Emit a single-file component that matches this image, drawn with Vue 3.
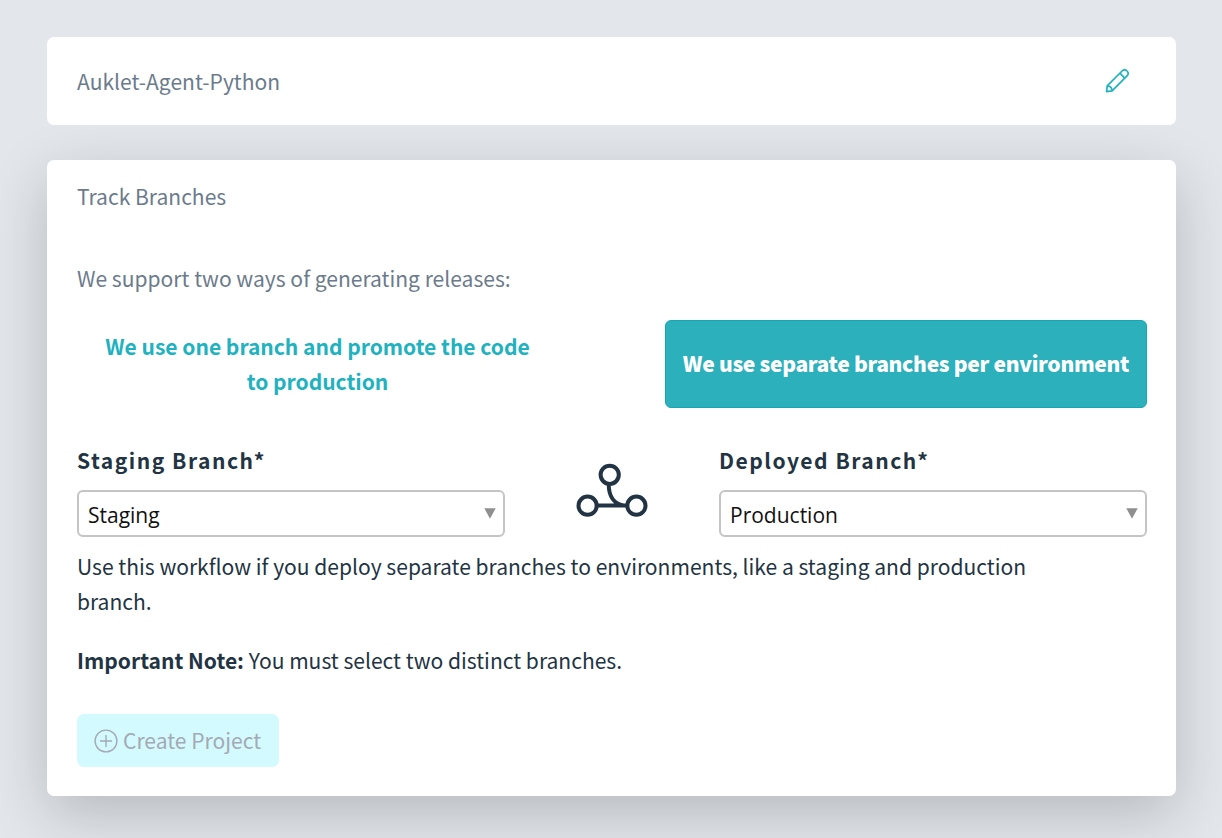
<script setup>
const fields = [
  { key: 'staging', label: 'Staging Branch*', value: 'Staging' },
  { key: 'deployed', label: 'Deployed Branch*', value: 'Production' },
]
</script>

<template>
  <main class="page">
    <section class="card header-card">
      <span>Auklet-Agent-Python</span>
      <svg class="pencil" width="26" height="26" viewBox="0 0 26 26" fill="none" stroke="#20b2bf" stroke-width="1.7" stroke-linejoin="round">
        <path d="M1.600 23.600 2.200 17.900 17.100 3c1.500-1.500 3.400-1.500 4.900 0s1.500 3.400 0 4.900L7.100 22.800Z" />
        <path d="m14.900 5.200 4.900 4.900M2.200 17.900c2.700.1 4.700 2.200 4.900 4.900" />
      </svg>
    </section>

    <section class="card track-card">
      <h2 class="title">Track Branches</h2>
      <p class="intro">We support two ways of generating releases:</p>

      <div class="modes">
        <button class="mode">We use one branch and promote the code to production</button>
        <button class="mode active">We use separate branches per environment</button>
      </div>

      <div class="fields">
        <template v-for="(field, i) in fields" :key="field.key">
          <svg v-if="i === 1" class="branch" width="72" height="54" viewBox="0 0 72 54" fill="none" stroke="#223443" stroke-width="4">
            <circle cx="33.700" cy="11.800" r="9.100" />
            <circle cx="11.600" cy="42.700" r="9.100" />
            <circle cx="60.400" cy="42.700" r="9.100" />
            <path d="M20.700 42.500h30.600M32.700 21c0 12.500 5.500 20 15 21.500" />
          </svg>
          <div class="field">
            <label>{{ field.label }}</label>
            <div class="select">
              <span>{{ field.value }}</span>
              <svg width="12" height="11" viewBox="0 0 12 11"><path d="M.300.300h11.400L6 10.700Z" fill="#8f8f8f" /></svg>
            </div>
          </div>
        </template>
      </div>

      <p class="help">Use this workflow if you deploy separate branches to environments, like a staging and production branch.</p>
      <p class="note"><b>Important Note:</b> You must select two distinct branches.</p>

      <button class="create">
        <svg width="24" height="24" viewBox="0 0 24 24" fill="none" stroke="#a4a9b4" stroke-width="1.400">
          <circle cx="12" cy="12" r="10.900" />
          <path d="M12 6v12M6 12h12" />
        </svg>
        <span>Create Project</span>
      </button>
    </section>
  </main>
</template>

<style>
body {
  background: #e3e7ec;
}
</style>

<style scoped>
.page {
  box-sizing: border-box;
  height: 838px;
  padding: 37px 46px 0 47px;
  overflow: hidden;
  background: #e3e7ec;
  color: #223443;
  font: 400 21.050px/35px "Noto Sans CJK SC", "Noto Sans", sans-serif;
}
.card {
  box-sizing: border-box;
  border-radius: 7px;
  background: #fff;
}
.header-card {
  display: flex;
  align-items: center;
  justify-content: space-between;
  height: 88px;
  padding: 0 45px 0 30px;
  color: #6b7b8c;
}
.pencil {
  display: block;
}
.track-card {
  height: 636px;
  margin-top: 35px;
  padding: 19px 29px 0 30px;
  box-shadow: 0 18px 60px rgba(0, 0, 0, 0.2);
}
h2,
p {
  margin: 0;
  font-size: inherit;
  font-weight: 400;
}
.title,
.intro {
  color: #6b7b8c;
}
.intro {
  margin-top: 47px;
}
button {
  border: 0;
  background: none;
  font: inherit;
}
.modes {
  display: flex;
  justify-content: space-between;
  margin-top: 24px;
}
.mode {
  box-sizing: border-box;
  width: 482px;
  height: 88px;
  padding: 0 17px 1px 16px;
  border-radius: 6px;
  color: #20b2bf;
  font-weight: 700;
  letter-spacing: -0.02px;
}
.mode.active {
  padding: 0 16px 2px;
  border: 1px solid #12a8b4;
  background: #2cb0bc;
  color: #fff;
  font-weight: 900;
  letter-spacing: -0.32px;
  white-space: nowrap;
}
.fields {
  display: flex;
  justify-content: space-between;
  margin-top: 35px;
}
.field {
  width: 428px;
}
.branch {
  margin-top: 20px;
}
label {
  display: block;
  font-weight: 700;
  letter-spacing: 1.500px;
}
.select {
  box-sizing: border-box;
  display: flex;
  align-items: center;
  justify-content: space-between;
  height: 47px;
  margin-top: 12px;
  padding: 3px 7px 0 9px;
  border: 2px solid #c4c4c4;
  border-radius: 6px;
  color: #111;
  font-family: "Open Sans", sans-serif;
  font-size: 21px;
}
.select svg {
  margin-bottom: 4px;
}
.help {
  width: 960px;
  margin-top: 12px;
}
.note {
  margin-top: 24px;
}
.create {
  display: flex;
  align-items: center;
  gap: 5px;
  width: 202px;
  height: 53px;
  margin-top: 36px;
  padding: 0 0 0 17px;
  border-radius: 7px;
  background: #d3fafe;
  color: #a4a9b4;
  white-space: nowrap;
}
</style>
